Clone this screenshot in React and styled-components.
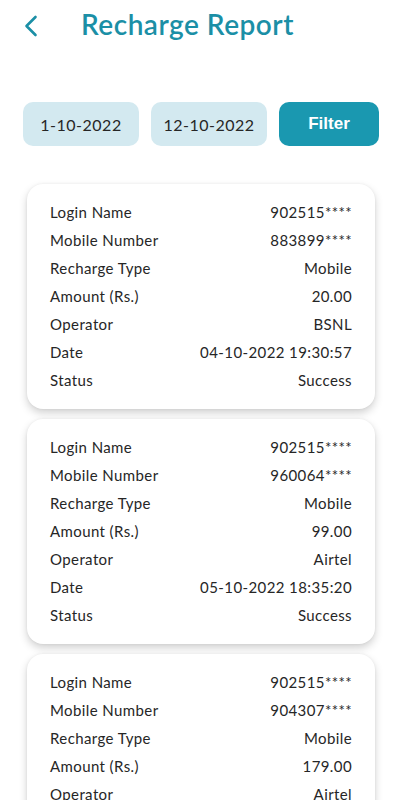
import React from 'react'
import styled, { createGlobalStyle } from 'styled-components';

const records = [
    { login: '902515****', mobile: '883899****', type: 'Mobile', amount: '20.00', operator: 'BSNL', date: '04-10-2022 19:30:57', status: 'Success' },
    { login: '902515****', mobile: '960064****', type: 'Mobile', amount: '99.00', operator: 'Airtel', date: '05-10-2022 18:35:20', status: 'Success' },
    { login: '902515****', mobile: '904307****', type: 'Mobile', amount: '179.00', operator: 'Airtel', date: '06-10-2022 11:12:45', status: 'Success' },
]

const App = () => {
    return (
        <Page>
            <GlobalStyle />
            <Header>
                <Back aria-label="back">
                    <svg width="14" height="22" viewBox="0 0 14 22" fill="none">
                        <path d="M11.5 2 L2.5 11 L11.5 20" stroke="#1b8fa6" strokeWidth="2.6" strokeLinecap="round" strokeLinejoin="round" />
                    </svg>
                </Back>
                <Title>Recharge Report</Title>
            </Header>
            <FilterBar>
                <DateBox>1-10-2022</DateBox>
                <DateBox>12-10-2022</DateBox>
                <FilterButton>Filter</FilterButton>
            </FilterBar>
            <List>
                {records.map((r, i) => (
                    <Card key={i}>
                        <Row><Label>Login Name</Label><Value>{r.login}</Value></Row>
                        <Row><Label>Mobile Number</Label><Value>{r.mobile}</Value></Row>
                        <Row><Label>Recharge Type</Label><Value>{r.type}</Value></Row>
                        <Row><Label>Amount (Rs.)</Label><Value>{r.amount}</Value></Row>
                        <Row><Label>Operator</Label><Value>{r.operator}</Value></Row>
                        <Row><Label>Date</Label><Value>{r.date}</Value></Row>
                        <Row><Label>Status</Label><Value>{r.status}</Value></Row>
                    </Card>
                ))}
            </List>
        </Page>
    )
}

export default App

const GlobalStyle = createGlobalStyle`
body {
margin:0;
background:#ffffff;
font-family: "Lato", "Open Sans", sans-serif;
}
`

const Page = styled.div`
width:402px;
height:800px;
overflow:hidden;
background:#fff;
`

const Header = styled.div`
display:flex;
align-items:center;
height:50px;
padding-left:24px;
`

const Back = styled.div`
width:14px;
height:22px;
display:flex;
margin-right:43px;
margin-top:1px;
`

const Title = styled.h1`
margin:0;
margin-top:-2px;
font-size:28px;
font-weight:600;
color:#1b8fa6;
letter-spacing:0.5px;
`

const FilterBar = styled.div`
display:flex;
gap:12px;
padding:52px 23px 0 23px;
`

const DateBox = styled.div`
width:116px;
height:44px;
border-radius:10px;
background:#d3e9f0;
display:flex;
align-items:center;
justify-content:center;
font-size:16px;
letter-spacing:0.5px;
color:#262626;
`

const FilterButton = styled.button`
width:100px;
height:44px;
border:none;
border-radius:10px;
background:#1a98b0;
color:#fff;
font-family: "Liberation Sans", Arial, sans-serif;
font-weight:bold;
font-size:17px;
cursor:pointer;
`

const List = styled.div`
display:flex;
flex-direction:column;
gap:10px;
padding:38px 27px 20px 27px;
`

const Card = styled.div`
background:#fff;
border-radius:16px;
box-shadow:0 4px 8px rgba(0,0,0,0.18), 0 0 3px rgba(0,0,0,0.06);
padding:14px 23px 15px 23px;
`

const Row = styled.div`
display:flex;
justify-content:space-between;
align-items:center;
height:28px;
font-size:15px;
letter-spacing:0.4px;
color:#262626;
`

const Label = styled.span`
`

const Value = styled.span`
`
